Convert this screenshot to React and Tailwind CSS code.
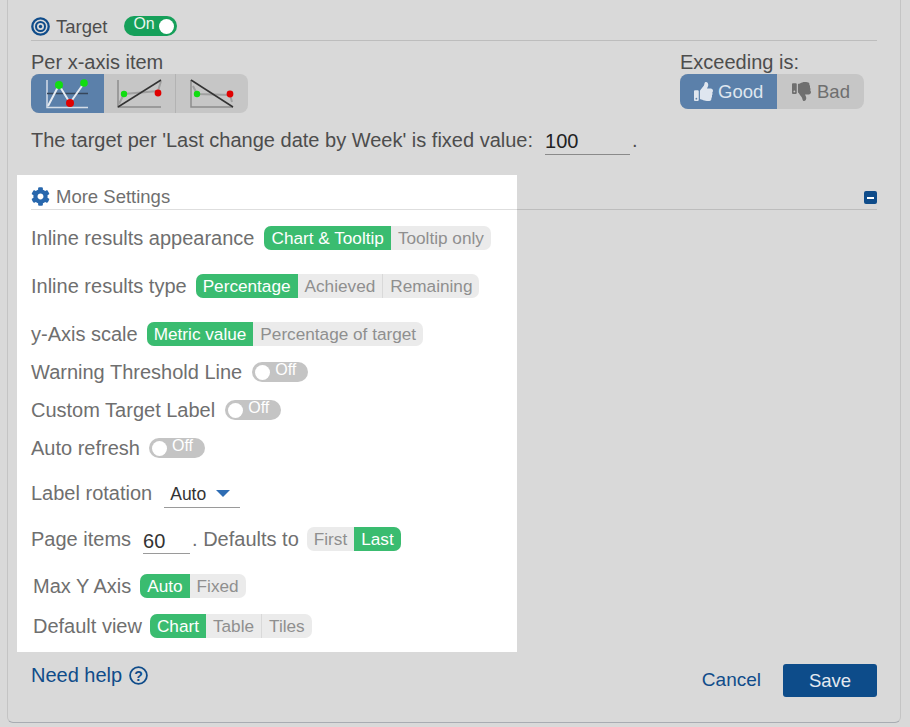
import { FaCog, FaThumbsUp, FaThumbsDown } from 'react-icons/fa'

const FONT = { fontFamily: '"Liberation Sans", Arial, sans-serif' }

function Segmented({ items, active, className = '' }) {
  return (
    <div className={`flex h-6 rounded-[7px] overflow-hidden bg-[#ebebeb] text-[17.2px] leading-6 ${className}`}>
      {items.map((item, i) => (
        <span
          key={item}
          className={`px-[7px] ${i === active ? 'bg-[#3abc70] text-white' : 'text-[#8f8f8f]'} ${i > 0 && i !== active && i - 1 !== active ? 'border-l border-[#d9d9d9]' : ''}`}
        >
          {item}
        </span>
      ))}
    </div>
  )
}

function OffToggle() {
  return (
    <div className="flex h-5 w-[56px] rounded-full bg-[#c4c4c4] items-center pl-[3px]">
      <span className="w-[15px] h-[15px] rounded-full bg-white" />
      <span className="ml-[5px] text-[16px] leading-4 -mt-[4px] text-white">Off</span>
    </div>
  )
}

function Row({ className = '', children }) {
  return <div className={`flex items-center h-6 text-[20px] text-[#6f6f6f] ${className}`}>{children}</div>
}

function LineChartIcon() {
  return (
    <svg width="73" height="39" viewBox="0 0 73 39">
      <path d="M16 6V33.5H57" fill="none" stroke="#d5dde8" strokeWidth="1.5" />
      <path d="M16 19.5H57" stroke="#36465a" strokeWidth="1.5" />
      <path d="M17 32L28 11L39 29L53 9" fill="none" stroke="#e6ebf1" strokeWidth="2" />
      <circle cx="28" cy="11" r="4" fill="#11dd11" />
      <circle cx="39" cy="29" r="4" fill="#e00000" />
      <circle cx="53" cy="9" r="3.8" fill="#11dd11" />
    </svg>
  )
}

function RiseIcon() {
  return (
    <svg width="71" height="39" viewBox="0 0 71 39">
      <path d="M14 6V33H57" fill="none" stroke="#8c8c8c" strokeWidth="1.5" />
      <path d="M15 30L20 20L54 17L57 7" fill="none" stroke="#a0a0a0" strokeWidth="2" />
      <path d="M14 33L57 6" stroke="#333" strokeWidth="1.5" />
      <circle cx="20" cy="20" r="3.2" fill="#11dd11" />
      <circle cx="54" cy="19" r="3.4" fill="#e00000" />
    </svg>
  )
}

function FallIcon() {
  return (
    <svg width="72" height="39" viewBox="0 0 72 39">
      <path d="M15 6V33H57" fill="none" stroke="#8c8c8c" strokeWidth="1.5" />
      <path d="M17 12L21 20L54 21L56 28" fill="none" stroke="#a0a0a0" strokeWidth="2" />
      <path d="M15 6L57 33" stroke="#333" strokeWidth="1.5" />
      <circle cx="21" cy="20" r="3.2" fill="#11dd11" />
      <circle cx="54" cy="20" r="3.4" fill="#e00000" />
    </svg>
  )
}

export default function App() {
  return (
    <div className="w-[910px] h-[727px] bg-[#d9d9d9] overflow-hidden" style={FONT}>
      <div className="ml-[7px] w-[894px] h-[723px] border-x border-b border-x-[#c4c4c4] border-b-[#a8acb2] rounded-b-[6px] px-[23px] pt-4">
        {/* Target */}
        <div className="flex items-center h-[24px] border-b border-[#bdbdbd] box-content pb-0">
          <svg width="19" height="19" viewBox="0 0 19 19" className="-mt-1">
            <circle cx="9.5" cy="9.5" r="8.2" fill="none" stroke="#0f4c8a" strokeWidth="2.3" />
            <circle cx="9.5" cy="9.5" r="4.5" fill="none" stroke="#0f4c8a" strokeWidth="2" />
            <circle cx="9.5" cy="9.5" r="1.7" fill="#0f4c8a" />
          </svg>
          <span className="ml-[6px] text-[18.5px] text-[#4d4d4d] -mt-[2px]">Target</span>
          <div className="ml-[17px] -mt-1 flex items-center justify-between w-[53px] h-5 rounded-full bg-[#16a05a] pl-[9px] pr-[3px]">
            <span className="text-[16px] leading-4 text-[#e8f5ee] -mt-[4px]">On</span>
            <span className="w-[15px] h-[15px] rounded-full bg-white" />
          </div>
        </div>

        <div className="flex justify-between mt-[9px]">
          <div>
            <div className="text-[20px] leading-6 text-[#4d4d4d]">Per x-axis item</div>
            <div className="flex h-[39px] w-[217px] rounded-[8px] overflow-hidden bg-[#c6c6c6]">
              <div className="w-[73px] bg-[#5b80aa]"><LineChartIcon /></div>
              <div className="w-[71px]"><RiseIcon /></div>
              <div className="flex-1 border-l border-[#b3b3b3]"><FallIcon /></div>
            </div>
          </div>
          <div className="mr-[13px]">
            <div className="text-[20px] leading-6 text-[#4d4d4d]">Exceeding is:</div>
            <div className="flex h-[35px] w-[184px] rounded-[8px] overflow-hidden bg-[#c6c6c6] text-[18.5px]">
              <div className="w-[97px] bg-[#5b80aa] text-[#dfe6ef] flex items-center pl-[14px] gap-[5px]">
                <FaThumbsUp className="w-[19px] h-[19px]" /> Good
              </div>
              <div className="flex-1 text-[#6f6f6f] flex items-center pl-[15px] gap-[6px]">
                <FaThumbsDown className="w-[19px] h-[19px]" /> Bad
              </div>
            </div>
          </div>
        </div>

        <div className="flex items-center h-7 mt-[13px] text-[20px] text-[#4d4d4d]">
          <span>The target per 'Last change date by Week' is fixed value:</span>
          <span className="ml-3 w-[85px] h-7 mt-[2px] border-b border-[#8a8a8a] text-[#222] leading-7">100</span>
          <span className="ml-[2px]">.</span>
        </div>

        {/* More Settings */}
        <div className="-ml-[14px] mt-[21px] w-[500px] h-[477px] bg-white pl-[14px] pt-[9px]">
          <div className="w-[846px]">
            <div className="flex items-center justify-between h-[25px]">
              <div className="flex items-center">
                <FaCog className="w-[19px] h-[19px] text-[#2767ad]" />
                <span className="ml-[6px] text-[18.5px] text-[#6f6f6f]">More Settings</span>
              </div>
              <span className="flex items-center justify-center w-[13px] h-[13px] mt-[2px] rounded-[2px] bg-[#0f4c8a]">
                <span className="w-[7px] h-[2px] bg-white" />
              </span>
            </div>
            <div className="flex h-px">
              <div className="w-[486px] bg-[#dedede]" />
              <div className="flex-1 bg-[#bdbdbd]" />
            </div>
          </div>

          <Row className="mt-4">
            <span>Inline results appearance</span>
            <Segmented className="ml-[10px]" items={['Chart & Tooltip', 'Tooltip only']} active={0} />
          </Row>
          <Row className="mt-6">
            <span>Inline results type</span>
            <Segmented className="ml-[9px]" items={['Percentage', 'Achieved', 'Remaining']} active={0} />
          </Row>
          <Row className="mt-6">
            <span>y-Axis scale</span>
            <Segmented className="ml-[9px]" items={['Metric value', 'Percentage of target']} active={0} />
          </Row>
          <Row className="mt-[14px]">
            <span>Warning Threshold Line</span>
            <span className="ml-[10px]"><OffToggle /></span>
          </Row>
          <Row className="mt-[14px]">
            <span>Custom Target Label</span>
            <span className="ml-[10px]"><OffToggle /></span>
          </Row>
          <Row className="mt-[14px]">
            <span>Auto refresh</span>
            <span className="ml-[9px]"><OffToggle /></span>
          </Row>
          <Row className="mt-[21px]">
            <span>Label rotation</span>
            <div className="ml-3 w-[76px] h-[27px] mt-[3px] border-b border-[#9a9a9a] flex items-center pl-[6px] text-[17.5px] text-[#333]">
              Auto
              <span className="ml-[10px] -mt-[2px] border-x-[7px] border-t-[7px] border-x-transparent border-t-[#2e6db4]" />
            </div>
          </Row>
          <Row className="mt-[22px]">
            <span>Page items</span>
            <span className="ml-3 w-[47px] h-[27px] mt-[3px] border-b border-[#9a9a9a] text-[#333] leading-7">60</span>
            <span className="ml-[2px]">. Defaults to</span>
            <Segmented className="ml-[8px]" items={['First', 'Last']} active={1} />
          </Row>
          <Row className="mt-[23px] pl-[2px]">
            <span>Max Y Axis</span>
            <Segmented className="ml-[9px]" items={['Auto', 'Fixed']} active={0} />
          </Row>
          <Row className="mt-4 pl-[2px]">
            <span>Default view</span>
            <Segmented className="ml-[8px]" items={['Chart', 'Table', 'Tiles']} active={0} />
          </Row>
        </div>

        {/* Footer */}
        <div className="flex items-start justify-between h-[46px] mt-3">
          <div className="flex items-center text-[20px] text-[#0f4c8a] h-[22px]">
            Need help
            <svg width="19" height="19" viewBox="0 0 19 19" className="ml-[7px]">
              <circle cx="9.5" cy="9.5" r="8.4" fill="none" stroke="#0f4c8a" strokeWidth="1.8" />
              <text x="9.5" y="14.5" textAnchor="middle" fontSize="14" fontWeight="700" fill="#0f4c8a">?</text>
            </svg>
          </div>
          <div className="flex items-center">
            <span className="text-[19px] text-[#0f4c8a]">Cancel</span>
            <button className="ml-[22px] w-[94px] h-[33px] rounded-[3px] bg-[#0d4c8a] text-[18.5px] text-[#e3e9f0]">Save</button>
          </div>
        </div>
      </div>
    </div>
  )
}
